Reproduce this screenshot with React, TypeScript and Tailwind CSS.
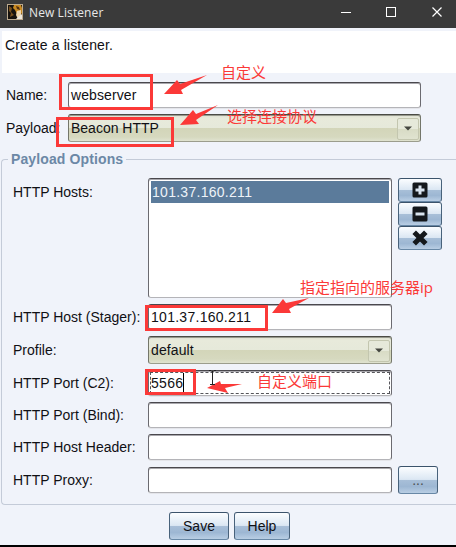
import type { ReactNode } from "react";

const inputBox =
  "h-[26px] rounded-[3px] border border-t-[#4a484d] border-x-[#6b6a70] border-b-[#b4b4b8] bg-white shadow-[inset_0_1px_0_#a9a8ad,0_1px_0_#e4e5ea]";

function Field({ text, className = "" }: { text?: string; className?: string }) {
  return (
    <div className={`${inputBox} flex items-center px-[2px] ${className}`}>{text}</div>
  );
}

function Combo({ text, className = "" }: { text: string; className?: string }) {
  return (
    <div
      className={`flex h-7 items-center justify-between rounded-[3px] border border-t-[#4a4b45] border-x-[#74766a] border-b-[#9b9d8d] bg-[linear-gradient(#dcdecf_0,#e8eadb_3px,#e6e9da_49%,#d3d5b9_50%,#d6d9bf_85%,#e0e3d0_100%)] pl-[2px] pr-[1px] shadow-[inset_0_1px_0_#97998d] ${className}`}
    >
      <span>{text}</span>
      <span className="mt-[1px] flex h-[22px] w-[22px] items-center justify-center rounded-[2px] border border-[#c3c6af] bg-[linear-gradient(#e6e9da_49%,#d8dbc5_50%,#e0e3d0)]">
        <svg width="8" height="5" viewBox="0 0 8 5">
          <path d="M0 0.5H8L4 4.5Z" fill="#44463f" />
        </svg>
      </span>
    </div>
  );
}

function Button({ children, className = "" }: { children: ReactNode; className?: string }) {
  return (
    <button
      className={`flex items-center justify-center rounded-[3px] border border-t-[#3b536b] border-x-[#48627b] border-b-[#6888a6] bg-[linear-gradient(#fbfdff_0,#dbe7f3_48%,#a8bfd8_50%,#9db7d3_75%,#b9cee4_100%)] ${className}`}
    >
      {children}
    </button>
  );
}

function Row({ label, height, children }: { label: string; height: string; children: ReactNode }) {
  return (
    <div className={`flex items-center ${height}`}>
      <label className="w-[135px] shrink-0 whitespace-nowrap">{label}</label>
      {children}
    </div>
  );
}

function TitleBar() {
  return (
    <header className="flex h-7 items-center bg-[#3a3a3a] pl-[7px] text-white">
      <svg width="16" height="16" viewBox="0 0 16 16" className="-mt-1">
        <rect width="16" height="16" fill="#bba98e" />
        <rect x="1" y="1" width="14" height="14" fill="#17120d" />
        <path d="M2 2L5 4L4 8L7 11L3 13L4 9L2 7Z" fill="#78501d" />
        <path d="M7 1H14L15 4V10L12 8L10 10L8 6L6 4Z" fill="#c98a22" />
        <path d="M9 2L12 3L13 6L10 5Z" fill="#533010" />
        <path d="M10 7L14 6V12L11 15L9 11Z" fill="#efd6ad" />
        <path d="M11 13L15 10V15H9Z" fill="#eee7dc" />
      </svg>
      <h1 className="-mt-[3px] ml-[6px] font-['Open_Sans','Noto_Sans',sans-serif] text-[12px] tracking-[0.1px] text-[#e8e8e8]">
        New Listener
      </h1>
      <svg width="104" height="16" viewBox="0 0 104 16" className="-mt-1 ml-auto mr-[12px]" fill="none" stroke="#fff">
        <path d="M1 8.5H11" />
        <rect x="46.5" y="3.5" width="9" height="9" />
        <path d="M92.5 3.5L101.5 12.5M101.5 3.5L92.5 12.5" strokeWidth="1.2" />
      </svg>
    </header>
  );
}

function Note({ text, className }: { text: string; className: string }) {
  return (
    <span
      className={`absolute whitespace-nowrap font-['Open_Sans','Noto_Sans_CJK_SC',sans-serif] text-[15px] leading-5 text-[#fb3938] ${className}`}
    >
      {text}
    </span>
  );
}

function Annotations() {
  return (
    <div className="pointer-events-none absolute inset-0">
      <div className="absolute left-[59px] top-[74px] h-9 w-[94px] border-3 border-[#fb3938]" />
      <div className="absolute left-[56px] top-[117px] h-[30px] w-[118px] border-3 border-[#fb3938]" />
      <div className="absolute left-[145px] top-[305px] h-[26px] w-[123px] border-3 border-[#fb3938]" />
      <div className="absolute left-[145px] top-[369px] h-[26px] w-[51px] border-3 border-[#fb3938]" />
      <svg className="absolute inset-0" width="456" height="547" viewBox="0 0 456 547" fill="#fb3938">
        <path d="M164 94L177 80L180 84L207 75L181 90L183 94Z" />
        <path d="M180 125L193 110L196 114L218 105L196 120L199 124Z" />
        <path d="M272 313L283 299L286 303L309 298L289 309L291 313Z" />
        <path d="M207 388L220 381L221 384L242 384L225 388L228 393Z" />
        <path d="M209 370.5H211M214 370.5H216M211.5 371.5H213.5M212.5 371V384M210 384.5H215" fill="none" stroke="#222" />
      </svg>
      <Note text="自定义" className="left-[221px] top-[62px]" />
      <Note text="选择连接协议" className="left-[227px] top-[106px]" />
      <Note text="指定指向的服务器ip" className="left-[300px] top-[277px]" />
      <Note text="自定义端口" className="left-[257px] top-[371px]" />
    </div>
  );
}

export default function App() {
  return (
    <main className="relative flex h-[547px] w-[456px] flex-col overflow-hidden bg-[#f0f3fa] font-['Liberation_Sans',Arial,sans-serif] text-[14px] leading-4 text-[#101014]">
      <TitleBar />
      <section className="ml-[2px] mt-[3px] h-[42px] bg-white pl-[3px] pt-[6px] tracking-[0.12px]">
        Create a listener.
      </section>

      <section className="mt-[9px] flex flex-col gap-[6px] pl-[6px]">
        <div className="flex h-[26px] items-center">
          <label className="w-[62px]">Name:</label>
          <Field text="webserver" className="w-[353px] tracking-[0.1px]" />
        </div>
        <div className="flex h-7 items-center">
          <label className="w-[62px]">Payload:</label>
          <Combo text="Beacon HTTP" className="w-[353px]" />
        </div>
      </section>

      <fieldset className="ml-[1px] mt-2 h-[355px] rounded-l-[4px] border border-r-0 border-[#c4cbd8] pl-[11px]">
        <legend className="-ml-[5px] h-[18px] px-[3px] text-[14px] font-bold leading-[18px] tracking-[0.12px] text-[#6c88a6]">
          Payload Options
        </legend>
        <div className="mt-[10px] flex flex-col gap-[6px]">
          <div className="flex h-[120px]">
            <label className="w-[135px] pt-[6px]">HTTP Hosts:</label>
            <div className="w-[244px] rounded-[3px] border border-t-[#4a484d] border-x-[#6b6a70] border-b-[#b4b4b8] bg-white p-[2px] shadow-[inset_0_1px_0_#a9a8ad]">
              <div className="flex h-[22px] items-center bg-[#5b7b9b] pl-[1px] tracking-[0.28px] text-[#eef3f8]">
                101.37.160.211
              </div>
            </div>
            <div className="ml-[6px] flex flex-col">
              <Button className="h-6 w-11">
                <svg width="16" height="16" viewBox="0 0 16 16">
                  <rect x="0.5" y="0.5" width="15" height="15" rx="1.5" fill="#14181c" />
                  <path d="M8 3.5V12.5M3.5 8H12.5" stroke="#d9e4ef" strokeWidth="3" />
                </svg>
              </Button>
              <Button className="h-6 w-11">
                <svg width="16" height="16" viewBox="0 0 16 16">
                  <rect x="0.5" y="0.5" width="15" height="15" rx="1.5" fill="#14181c" />
                  <path d="M3.5 8H12.5" stroke="#d9e4ef" strokeWidth="3" />
                </svg>
              </Button>
              <Button className="h-6 w-11">
                <svg width="16" height="16" viewBox="0 0 16 16">
                  <path d="M2.2 2.2L13.8 13.8M13.8 2.2L2.2 13.8" stroke="#14181c" strokeWidth="5" />
                </svg>
              </Button>
            </div>
          </div>
          <Row label="HTTP Host (Stager):" height="h-[26px]">
            <Field text="101.37.160.211" className="w-[244px] tracking-[0.28px]" />
          </Row>
          <Row label="Profile:" height="h-7">
            <Combo text="default" className="w-[244px] tracking-[0.1px]" />
          </Row>
          <Row label="HTTP Port (C2):" height="h-[26px]">
            <div className={`${inputBox} w-[244px] p-[1px]`}>
              <div className="flex h-full items-center border border-dashed border-[#55555a] tracking-[0.28px]">
                5566
                <span className="h-[20px] w-px bg-black" />
              </div>
            </div>
          </Row>
          <Row label="HTTP Port (Bind):" height="h-[26px]">
            <Field className="w-[244px]" />
          </Row>
          <Row label="HTTP Host Header:" height="h-[26px]">
            <Field className="w-[244px]" />
          </Row>
          <Row label="HTTP Proxy:" height="h-7">
            <Field className="w-[244px]" />
            <Button className="ml-[6px] h-7 w-10 text-[#4a4f50]">...</Button>
          </Row>
        </div>
      </fieldset>

      <footer className="mt-[7px] flex gap-[5px] pl-[169px]">
        <Button className="h-7 w-[60px]">Save</Button>
        <Button className="h-7 w-14">Help</Button>
      </footer>
      <div className="mt-auto h-[2px] shrink-0 bg-black" />
      <Annotations />
    </main>
  );
}
